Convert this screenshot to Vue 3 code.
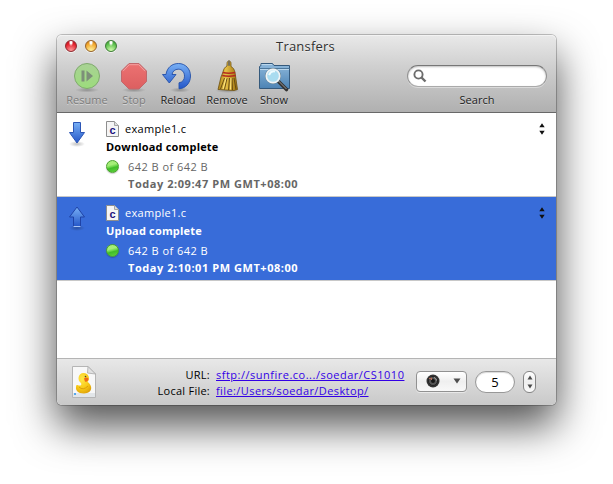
<script setup>
const transfers = [
  { id: 1, dir: 'down', name: 'example1.c', status: 'Download complete', size: '642 B of 642 B', time: 'Today 2:09:47 PM GMT+08:00', selected: false },
  { id: 2, dir: 'up', name: 'example1.c', status: 'Upload complete', size: '642 B of 642 B', time: 'Today 2:10:01 PM GMT+08:00', selected: true },
]
</script>

<template>
  <div class="desktop">
    <svg class="defs" width="0" height="0" aria-hidden="true">
      <defs>
        <linearGradient id="blue" x1="0" y1="0" x2="0" y2="1">
          <stop offset="0" stop-color="#78b0f5" />
          <stop offset="1" stop-color="#2456c8" />
        </linearGradient>
        <linearGradient id="folder" x1="0" y1="0" x2="0" y2="1">
          <stop offset="0" stop-color="#8fb9dc" />
          <stop offset="1" stop-color="#4c83b4" />
        </linearGradient>
        <linearGradient id="green" x1="0" y1="0" x2="0" y2="1">
          <stop offset="0" stop-color="#a9d295" />
          <stop offset="1" stop-color="#9cdc7c" />
        </linearGradient>
        <linearGradient id="red" x1="0" y1="0" x2="0" y2="1">
          <stop offset="0" stop-color="#ec7272" />
          <stop offset="1" stop-color="#dc5f60" />
        </linearGradient>
        <linearGradient id="straw" x1="0" y1="0" x2="1" y2="0">
          <stop offset="0" stop-color="#a98018" />
          <stop offset=".4" stop-color="#e6c046" />
          <stop offset="1" stop-color="#9c700e" />
        </linearGradient>
        <radialGradient id="duck" cx=".4" cy=".3" r=".8">
          <stop offset="0" stop-color="#ffe84a" />
          <stop offset=".6" stop-color="#f8c814" />
          <stop offset="1" stop-color="#d99a08" />
        </radialGradient>
        <radialGradient id="soft">
          <stop offset="0" stop-color="#000" stop-opacity=".25" />
          <stop offset="1" stop-color="#000" stop-opacity="0" />
        </radialGradient>
      </defs>
    </svg>

    <main class="window">
      <header class="header">
        <div class="titlebar">
          <div class="lights">
            <i class="light close"></i><i class="light minimize"></i><i class="light zoom"></i>
          </div>
          <h1 class="title">Transfers</h1>
        </div>
        <div class="toolbar">
          <div class="tool disabled">
            <svg width="34" height="34" viewBox="0 0 34 34">
              <ellipse cx="17" cy="30" rx="12" ry="2.500" fill="url(#soft)" />
              <circle cx="17" cy="16" r="12.500" fill="url(#green)" stroke="#7faa6d" />
              <path d="M11.500 10.500h3v11h-3zM16.500 10.500l6.500 5.500l-6.500 5.500z" fill="#7d8f79" />
            </svg>
            <span>Resume</span>
          </div>
          <div class="tool disabled">
            <svg width="34" height="34" viewBox="0 0 34 34">
              <ellipse cx="17" cy="30" rx="12" ry="2.500" fill="url(#soft)" />
              <path d="M12 3.500h10l7.500 7.500v10.500l-7.500 7.500H12l-7.500-7.500V11z" fill="url(#red)" stroke="#c0686c" />
              <path d="M6 11.200l6.300-6.500h9.400l6.300 6.500" fill="none" stroke="#f3a0a0" />
            </svg>
            <span>Stop</span>
          </div>
          <div class="tool">
            <svg width="34" height="34" viewBox="0 0 34 34">
              <ellipse cx="19" cy="30" rx="10" ry="2.500" fill="url(#soft)" />
              <path d="M5 14.500C6 7.500 11 3.500 17.500 3.500c7 0 12 5.500 12 12.500c0 7-5 12.500-11.500 12.800v-6c3.500-.5 5.500-3 5.500-6.600c0-4-2.500-7-6.200-7c-3.300 0-5.600 1.800-6.300 5.300h4l-6.700 8.500L1.500 14.500z" fill="url(#blue)" stroke="#2450a8" stroke-width=".9" />
            </svg>
            <span>Reload</span>
          </div>
          <div class="tool">
            <svg width="34" height="34" viewBox="0 0 34 34">
              <ellipse cx="18" cy="30.500" rx="13" ry="2.500" fill="url(#soft)" />
              <path d="M17 3.500c0-3.500 4-3.500 4 0v3c2 1 3.500 3 4 6l2.500 17-3.500 1-16-1L11 17l2-5c.5-3 2-5 4-6z" fill="url(#straw)" stroke="#6d5010" stroke-width=".8" />
              <path d="M14.500 18l-4 11M17 18l-2.500 11.500M19.500 18l-1 12M22 18l.5 12M24 18l2 11.500" fill="none" stroke="#604510" stroke-width=".9" />
              <path d="M16 18l-3 11M21 18l-.5 11.500" stroke="#ffe886" />
              <path d="M12.700 12.500q6 1.500 12.500 0M12.200 15.500q6.500 1.500 13.500 0" fill="none" stroke="#b42b20" stroke-width="1.300" />
              <path d="M18 .8h2v5h-2z" fill="#7d7358" />
            </svg>
            <span>Remove</span>
          </div>
          <div class="tool">
            <svg width="34" height="34" viewBox="0 0 34 34">
              <path d="M2.500 28.500v-22l1.500-1V3.500h11.500l1.500 2h15.500v23z" fill="url(#folder)" stroke="#34597c" />
              <path d="M4.500 4.500h10.500M3 9.500h29" stroke="#b9d6ec" fill="none" />
              <path d="M2.500 8.500h30" stroke="#4c779c" fill="none" />
              <path d="M21.500 21.500l8 8" stroke="#333" stroke-width="3.600" stroke-linecap="round" />
              <path d="M21.500 21l8 8" stroke="#999" stroke-width="1" />
              <circle cx="16" cy="16" r="7.600" fill="#bfe6f4" stroke="#667b87" stroke-width=".8" />
              <circle cx="16" cy="16" r="6.700" fill="#a9dcf0" stroke="#f0f4f6" stroke-width="1.700" />
              <path d="M12 15q2-4.500 6-3.500" stroke="#effcff" stroke-width="2" fill="none" />
            </svg>
            <span>Show</span>
          </div>
          <div class="search">
            <div class="field">
              <svg width="14" height="14" viewBox="0 0 14 14"><circle cx="5.500" cy="5.500" r="4.100" fill="none" stroke="#6c6c6c" stroke-width="1.900" /><path d="M8.500 8.500l4 4" stroke="#6c6c6c" stroke-width="2.400" /></svg>
            </div>
            <span>Search</span>
          </div>
        </div>
      </header>

      <section class="list">
        <article v-for="t in transfers" :key="t.id" class="row" :class="{ selected: t.selected }">
          <svg class="arrow" width="20" height="28" viewBox="0 0 20 28">
            <ellipse cx="10" cy="24" rx="8" ry="3" fill="url(#soft)" />
            <path v-if="t.dir === 'down'" d="M6.500 2.500h7v10h4L10 23 2.500 12.500h4z" fill="url(#blue)" stroke="#2b55b5" />
            <path v-else d="M10 3L17.500 13h-4v9.500h-7V13h-4z" fill="url(#blue)" stroke="#1f43a6" />
            <path v-if="t.dir === 'up'" d="M6.500 22.500h7" stroke="#a9c5f5" />
          </svg>
          <div class="details">
            <div class="file">
              <svg width="13" height="16" viewBox="0 0 13 16">
                <path d="M.5.500h8l4 4v11H.5z" fill="#f5f5f5" stroke="#8e8e8e" />
                <path d="M8.500.500v4h4" fill="#ddd" stroke="#a5a5a5" />
                <text x="6.500" y="12.700" text-anchor="middle" class="glyph">c</text>
              </svg>
              <span class="name">{{ t.name }}</span>
            </div>
            <strong class="status">{{ t.status }}</strong>
            <div class="progress">
              <i class="dot"></i>
              <div class="meta"><span class="size">{{ t.size }}</span><strong class="time">{{ t.time }}</strong></div>
            </div>
          </div>
          <svg class="sort" width="6" height="12" viewBox="0 0 6 12"><path d="M.3 4.200L3 .3 5.700 4.200zM.3 7.800L3 11.700 5.700 7.800z" fill="#111" /></svg>
        </article>
      </section>

      <footer class="footer">
        <svg class="doc" width="24" height="32" viewBox="0 0 24 32">
          <path d="M.5.500H16L23.500 8v23.500H.5z" fill="#f8f8f8" stroke="#b5b5b5" />
          <path d="M1 27h22v4H1z" fill="#e2e6e9" />
          <path d="M2 27h2v2H2z" fill="#57a7ea" />
          <path d="M4.500 19c1-.5 2 1 4 .5 1-.5 1-1.500.5-2.500-4-2.500-3-10 2.500-10s7 6 4 9c5 3 6 11-3.500 11.500C6 27.500 2.500 24 4.500 19z" fill="url(#duck)" />
          <path d="M12 12.500c2-2 5-.5 4.500 1s-2 3-3.500 2z" fill="#f06a18" />
          <circle cx="13.500" cy="10.500" r=".8" fill="#443" />
          <path d="M7 21q4 4 9-1" fill="none" stroke="#dc9f0c" stroke-width="1" />
          <path d="M16 .5L15.500 7l8 1z" fill="#e2e2e2" stroke="#a9a9a9" stroke-width=".8" />
        </svg>
        <dl class="paths">
          <dt>URL:</dt><dd><a class="url">sftp://sunfire.co.../soedar/CS1010</a></dd>
          <dt>Local File:</dt><dd><a class="local">file:/Users/soedar/Desktop/</a></dd>
        </dl>
        <div class="popup">
          <svg width="14" height="14" viewBox="0 0 14 14"><circle cx="7" cy="7" r="6.500" fill="#333" /><circle cx="7" cy="7" r="4.500" fill="#555" stroke="#222" /><circle cx="7" cy="7" r="2" fill="#161616" /><path d="M3 4.500L5.500 4v2" fill="none" stroke="#c4705a" /><path d="M8 3.500q2.500.500 2.500 3" fill="none" stroke="#aaa" /></svg>
          <svg width="8" height="6" viewBox="0 0 8 6"><path d="M.5.500h7L4 5.500z" fill="#4e4e4e" /></svg>
        </div>
        <div class="count">5</div>
        <div class="stepper">
          <svg width="6" height="14" viewBox="0 0 6 14"><path d="M.5 4.500L3 .5l2.500 4zM.5 9.500L3 13.500l2.500-4z" fill="#4a4a4a" /></svg>
        </div>
      </footer>
    </main>
  </div>
</template>

<style>
body { background: #fff; }
</style>

<style scoped>
.desktop { width: 613px; height: 484px; overflow: hidden; background: #fff; display: flex; align-items: flex-start; padding: 35px 57px; box-sizing: border-box; font: 11px/16px "Open Sans", "Noto Sans", sans-serif; color: #000; }
.defs { position: absolute; }
.window { flex: none; width: 499px; height: 370px; display: flex; flex-direction: column; border-radius: 5px; background: #fff; box-shadow: 0 0 0 1px rgba(0, 0, 0, .22), 0 20px 42px 1px rgba(0, 0, 0, .68); }
.header { height: 78px; box-sizing: border-box; border-bottom: 1px solid #686868; border-radius: 5px 5px 0 0; background: linear-gradient(#e9e9e9, #d0d0d0 40%, #b0b0b0); box-shadow: inset 0 1px #f3f3f3; flex: none; }
.titlebar { height: 25px; display: grid; grid-template-columns: 70px 1fr 70px; align-items: start; }
.lights { display: flex; gap: 8px; padding: 5px 0 0 8px; }
.light { width: 12px; height: 12px; border-radius: 50%; box-sizing: border-box; box-shadow: 0 1px rgba(255, 255, 255, .6); }
.close { border: 1px solid #8e2a30; background: radial-gradient(ellipse at 50% 12%, #fff 0 12%, transparent 32%), radial-gradient(circle at 50% 95%, #ff9d9d, #e3202c 65%, #a51520); }
.minimize { border: 1px solid #96622a; background: radial-gradient(ellipse at 50% 12%, #fff 0 12%, transparent 32%), radial-gradient(circle at 50% 95%, #fff5a0, #f2a62c 65%, #b97118); }
.zoom { border: 1px solid #3d7c36; background: radial-gradient(ellipse at 50% 12%, #fff 0 12%, transparent 32%), radial-gradient(circle at 50% 95%, #d5ffb0, #5bbf4c 65%, #398632); }
.title { margin: 0; padding-right: 2px; text-align: center; font-weight: 400; font-size: 13px; line-height: 22px; color: #303030; text-shadow: 0 1px rgba(255, 255, 255, .5); letter-spacing: .2px; }
.toolbar { height: 52px; display: grid; grid-template-columns: 48px 46px 42px 56px 38px 1fr; padding: 0 9px 0 6px; }
.tool { display: flex; flex-direction: column; align-items: center; white-space: nowrap; color: #222; text-shadow: 0 1px rgba(255, 255, 255, .45); }
.tool svg { display: block; flex: none; }
.tool span { line-height: 13px; margin-top: -1px; }
.disabled { color: #7c7c7c; }
.search { justify-self: end; width: 140px; display: flex; flex-direction: column; align-items: center; padding-top: 5px; color: #222; text-shadow: 0 1px rgba(255, 255, 255, .45); }
.search span { line-height: 13px; margin-top: 6px; }
.field { width: 140px; height: 22px; box-sizing: border-box; border: 1px solid #8d8d8d; border-color: #777 #929292 #aaa; border-radius: 11px; background: #fff; box-shadow: inset 0 1px 2px rgba(0, 0, 0, .25), 0 1px rgba(255, 255, 255, .4); display: flex; align-items: center; padding-left: 5px; }
.list { flex: 1; }
.row { height: 84px; box-sizing: border-box; border-bottom: 1px solid #c8c8c8; display: flex; align-items: flex-start; padding: 8px 10px 0; }
.arrow { flex: none; margin-top: -1px; }
.details { flex: 1; padding-left: 19px; }
.file { display: flex; align-items: center; height: 16px; gap: 6px; }
.name { letter-spacing: .3px; }
.status { display: block; line-height: 16px; margin-top: 2px; letter-spacing: .17px; }
.progress { display: flex; gap: 9px; margin-top: 3px; color: #666; }
.dot { width: 13px; height: 13px; box-sizing: border-box; border-radius: 50%; margin-top: 2px; border: 1px solid #49a02d; background: linear-gradient(165deg, #a5ee78 0 35%, #6cd84a 50%, #3fbc28 60%, #62d440); box-shadow: 0 1px 1px rgba(0, 0, 0, .2); flex: none; }
.meta { display: flex; flex-direction: column; line-height: 17px; }
.size { letter-spacing: .45px; }
.time { letter-spacing: .55px; }
.sort { margin-top: 2px; margin-right: 1px; }
.selected { background: #386cd9; color: #fff; }
.selected .progress { color: #fff; }
.glyph { font: 700 11px "Liberation Sans", sans-serif; fill: #20107e; }
.footer { height: 47px; flex: none; box-sizing: border-box; border-top: 1px solid #b4b4b4; border-radius: 0 0 5px 5px; background: linear-gradient(#e8e8e8, #c9c9c9); display: flex; align-items: flex-start; padding: 7px 19px 0 14px; }
.doc { flex: none; margin-left: 1px; }
.paths { margin: 1px 0 0; display: grid; grid-template-columns: 114px 188px; column-gap: 6px; line-height: 16px; white-space: nowrap; }
.paths dt { text-align: right; letter-spacing: .25px; }
.paths dd { margin: 0; }
.paths a { color: #3300e6; text-decoration: underline; text-underline-offset: 1px; }
.url { letter-spacing: .5px; }
.local { letter-spacing: .41px; }
.popup { width: 51px; height: 21px; flex: none; box-sizing: border-box; margin: 5px 0 0 12px; border: 1px solid #919191; border-radius: 4px; background: linear-gradient(#fff, #efefef 50%, #f8f8f8); box-shadow: 0 1px rgba(255, 255, 255, .5); display: flex; align-items: center; justify-content: space-between; padding: 0 5px 1px 9px; }
.count { width: 40px; height: 22px; flex: none; box-sizing: border-box; margin: 5px 0 0 8px; border: 1px solid #989898; border-radius: 11px; background: #fff; box-shadow: inset 0 1px 1px rgba(0, 0, 0, .15); text-align: center; font-size: 13px; line-height: 21px; }
.stepper { width: 13px; height: 22px; flex: none; box-sizing: border-box; margin: 5px 0 0 8px; border: 1px solid #858585; border-radius: 6px; background: linear-gradient(#fff, #eee 50%, #fafafa); display: flex; align-items: center; justify-content: center; }
</style>
